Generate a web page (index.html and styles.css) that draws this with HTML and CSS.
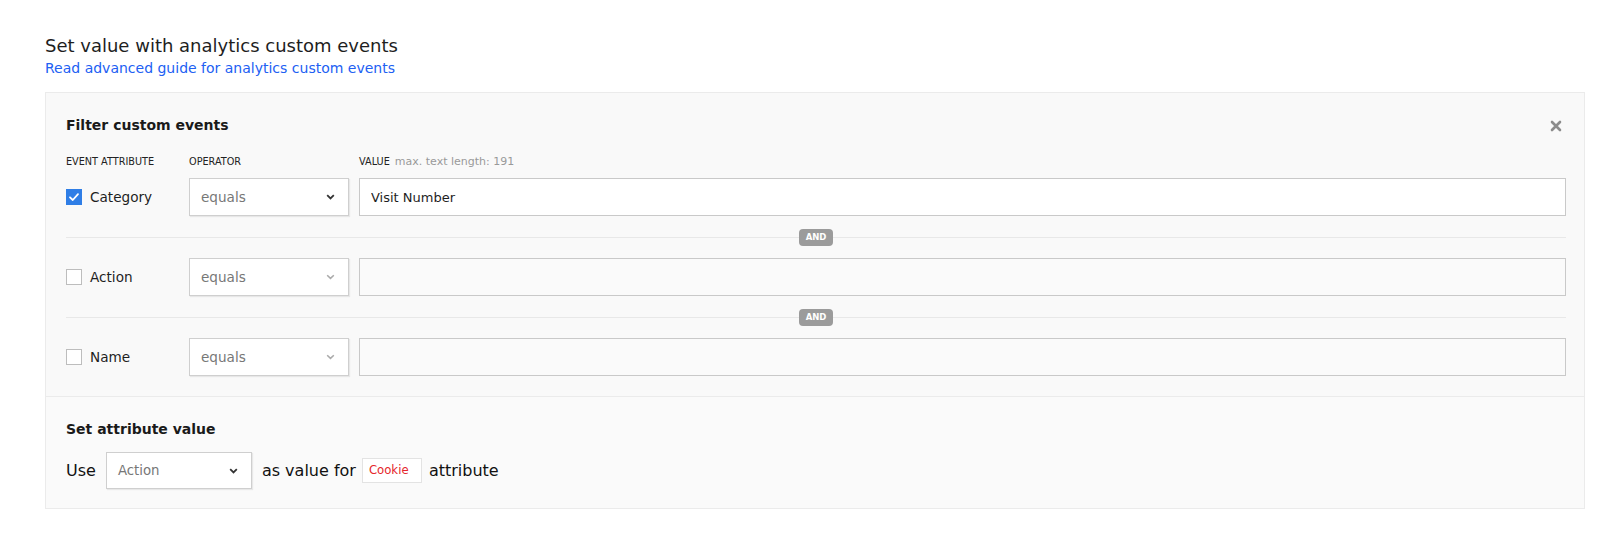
FILE: index.html
```html
<!DOCTYPE html>
<html lang="en">
<head>
  <meta charset="UTF-8">
  <title>Analytics Custom Events</title>
  <link rel="stylesheet" href="styles.css">
</head>
<body>

  <div class="page">
    <h2>Set value with analytics custom events</h2>
    <a class="guide" href="#">Read advanced guide for analytics custom events</a>

    <div class="panel">
      <div class="filter">
        <div class="panel-head">
          <h3>Filter custom events</h3>
          <span class="close">
            <svg width="12" height="12" viewBox="0 0 12 12"><path d="M2 2 L10 10 M10 2 L2 10" stroke="#8c8c8c" stroke-width="2.6" stroke-linecap="round"/></svg>
          </span>
        </div>

        <div class="labels">
          <span class="col-attr">EVENT ATTRIBUTE</span>
          <span class="col-op">OPERATOR</span>
          <span>VALUE <em>max. text length: 191</em></span>
        </div>

        <div class="row">
          <label class="attr">
            <span class="check checked">
              <svg width="16" height="16" viewBox="0 0 16 16"><path d="M4 8.3 L6.8 11 L12 5.2" fill="none" stroke="#fff" stroke-width="1.8" stroke-linecap="round" stroke-linejoin="round"/></svg>
            </span>
            Category
          </label>
          <div class="select">
            <span>equals</span>
            <svg width="9" height="6" viewBox="0 0 9 6"><path d="M1.2 1.2 L4.5 4.4 L7.8 1.2" fill="none" stroke="#333" stroke-width="1.8"/></svg>
          </div>
          <input type="text" value="Visit Number">
        </div>

        <div class="and-sep"><span class="badge">AND</span></div>

        <div class="row disabled">
          <label class="attr"><span class="check"></span>Action</label>
          <div class="select">
            <span>equals</span>
            <svg width="9" height="6" viewBox="0 0 9 6"><path d="M1.2 1.2 L4.5 4.4 L7.8 1.2" fill="none" stroke="#aaa" stroke-width="1.5"/></svg>
          </div>
          <input type="text" disabled>
        </div>

        <div class="and-sep"><span class="badge">AND</span></div>

        <div class="row disabled">
          <label class="attr"><span class="check"></span>Name</label>
          <div class="select">
            <span>equals</span>
            <svg width="9" height="6" viewBox="0 0 9 6"><path d="M1.2 1.2 L4.5 4.4 L7.8 1.2" fill="none" stroke="#aaa" stroke-width="1.5"/></svg>
          </div>
          <input type="text" disabled>
        </div>
      </div>

      <div class="assign">
        <h3>Set attribute value</h3>
        <div class="assign-row">
          <span>Use</span>
          <div class="select small">
            <span>Action</span>
            <svg width="9" height="6" viewBox="0 0 9 6"><path d="M1.2 1.2 L4.5 4.4 L7.8 1.2" fill="none" stroke="#333" stroke-width="1.8"/></svg>
          </div>
          <span>as value for</span>
          <span class="token">Cookie</span>
          <span>attribute</span>
        </div>
      </div>
    </div>
  </div>

</body>
</html>
```

FILE: styles.css
```css
* {
  margin: 0;
  padding: 0;
  box-sizing: border-box;
}
body {
  font-family: 'DejaVu Sans', Verdana, sans-serif;
  background: #fff;
  color: #222;
}
.page {
  padding: 35px 23px 0 45px;
}
h2 {
  font-size: 18px;
  font-weight: normal;
  line-height: 22px;
  color: #1e1e1e;
}
.guide {
  display: block;
  margin-top: 3px;
  font-size: 14px;
  line-height: 17px;
  color: #2160f3;
  text-decoration: none;
}
.panel {
  margin-top: 15px;
  background: #f9f9f9;
  border: 1px solid #ebebeb;
}
.filter {
  padding: 24px 18px 20px 20px;
  border-bottom: 1px solid #ebebeb;
}
.panel-head {
  display: flex;
  justify-content: space-between;
  align-items: center;
}
h3 {
  font-size: 14px;
  line-height: 17px;
  font-weight: bold;
  color: #1a1a1a;
}
.close {
  display: flex;
  margin-right: 4px;
}
.labels {
  display: flex;
  margin-top: 22px;
  margin-bottom: 10px;
  font-size: 9.7px;
  line-height: 12px;
  color: #222;
}
.labels em {
  font-style: normal;
  font-size: 11px;
  color: #999;
  margin-left: 2px;
}
.col-attr {
  width: 123px;
}
.col-op {
  width: 170px;
}
.row {
  display: flex;
  align-items: center;
  height: 38px;
}
.attr {
  width: 123px;
  display: flex;
  align-items: center;
  gap: 8px;
  font-size: 13.6px;
  color: #1e1e1e;
}
.check {
  width: 16px;
  height: 16px;
  display: flex;
  background: #fff;
  border: 1px solid #bdbdbd;
}
.check.checked {
  background: #2f7ee6;
  border: none;
}
.select {
  width: 160px;
  height: 38px;
  margin-right: 10px;
  display: flex;
  align-items: center;
  justify-content: space-between;
  padding: 0 13px 0 11px;
  background: #fff;
  border: 1px solid #cfcfcf;
  box-shadow: 1px 1px 1px rgba(0, 0, 0, 0.07);
  font-size: 13.6px;
  color: #777;
}
.row input {
  flex: 1;
  height: 38px;
  padding: 0 11px;
  border: 1px solid #c9c9c9;
  background: #fff;
  font-family: inherit;
  font-size: 13px;
  color: #1e1e1e;
  outline: none;
}
.row.disabled input {
  background: #fafafa;
}
.and-sep {
  display: flex;
  align-items: center;
  height: 17px;
  margin: 13px 0 12px;
}
.and-sep::before,
.and-sep::after {
  content: "";
  flex: 1;
  height: 1px;
  background: #e8e8e8;
}
.badge {
  width: 34px;
  height: 17px;
  line-height: 17px;
  text-align: center;
  background: #9b9b9b;
  border-radius: 4px;
  color: #fff;
  font-size: 8.5px;
  font-weight: bold;
}
.assign {
  padding: 24px 19px 19px 20px;
  background: #fafafa;
}
.assign-row {
  display: flex;
  align-items: center;
  margin-top: 14px;
  font-size: 16px;
  color: #111;
}
.select.small {
  width: 146px;
  height: 37px;
  margin: 0 10px 0 10px;
  font-size: 13.3px;
}
.token {
  width: 60px;
  height: 25px;
  line-height: 23px;
  margin: 0 7px 0 6px;
  padding-left: 6px;
  background: #fff;
  border: 1px solid #e3e3e3;
  font-size: 11.7px;
  color: #e5262c;
}
```
